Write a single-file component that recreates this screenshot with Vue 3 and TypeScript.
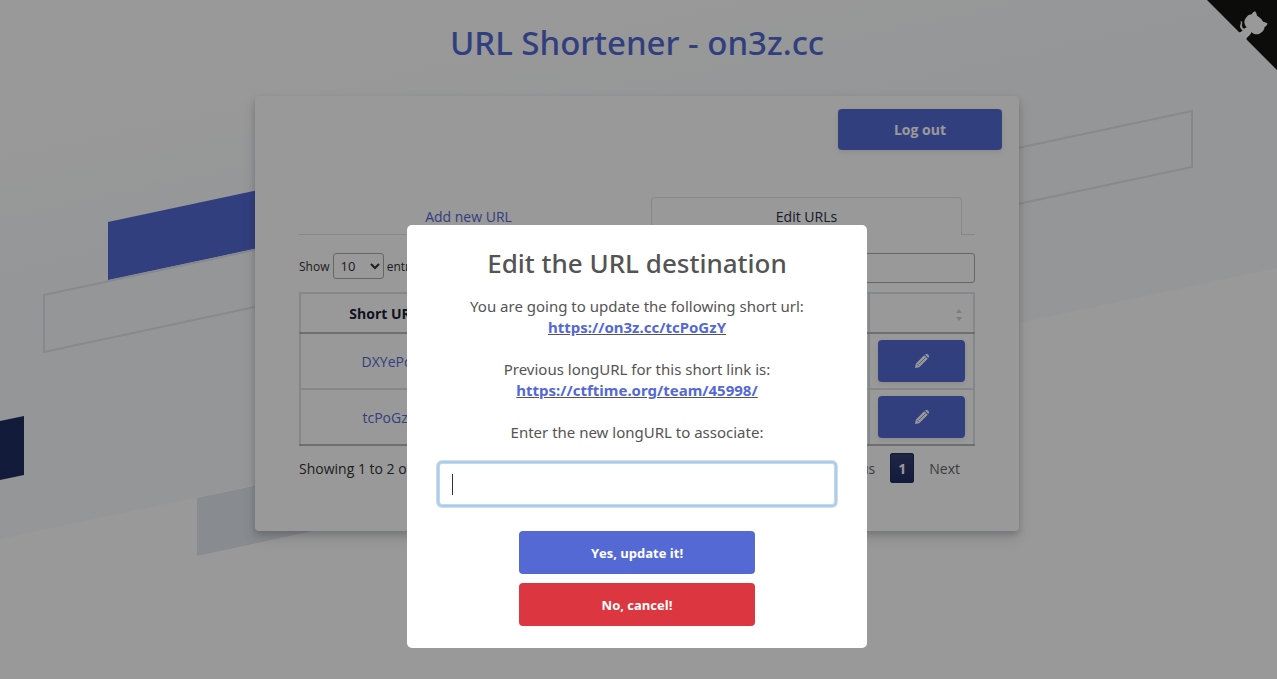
<script setup lang="ts">
import { onMounted, ref } from 'vue'

const codes: string[] = ['DXYePcr', 'tcPoGzY']

const pageSize = ref('10')
const search = ref('')
const newUrl = ref('')
const field = ref<HTMLInputElement | null>(null)

onMounted(() => field.value?.focus())
</script>

<template>
  <div class="page">
    <svg class="backdrop" viewBox="0 0 1277 679" preserveAspectRatio="xMidYMin slice" aria-hidden="true">
      <defs>
        <linearGradient id="sheet" gradientUnits="userSpaceOnUse" x1="0" y1="130" x2="38" y2="309">
          <stop offset="0" stop-color="#ffffff" />
          <stop offset="1" stop-color="#f7fafc" />
        </linearGradient>
      </defs>
      <path d="M0 0H1277V268L0 539Z" fill="url(#sheet)" />
      <path d="M108 222L400 160V218L108 280Z" fill="#5469d4" />
      <path d="M44 295L400 219V276L44 352Z" fill="none" stroke="#e3e5e9" stroke-width="2" />
      <path d="M0 421L24 416V475L0 480Z" fill="#212d63" />
      <path d="M197 498L400 455V512L197 556Z" fill="#e3e8ee" />
      <path d="M1192 111L900 173V229L1192 167Z" fill="none" stroke="#e3e5e9" stroke-width="2" />
    </svg>

    <a class="corner" href="#" aria-label="View source on GitHub">
      <svg viewBox="0 0 250 250" aria-hidden="true">
        <path d="M0,0 L115,115 L130,115 L142,142 L250,250 L250,0 Z" fill="#151513" />
        <path
          d="M128.3,109.0 C113.8,99.7 119.0,89.6 119.0,89.6 C122.0,82.7 120.5,78.6 120.5,78.6 C119.2,72.0 123.4,76.3 123.4,76.3 C127.3,80.9 125.5,87.3 125.5,87.3 C122.9,97.6 130.6,101.9 134.4,103.2"
          fill="#ffffff"
        />
        <path
          d="M115.0,115.0 C114.9,115.1 118.7,116.5 119.8,115.4 L133.7,101.6 C136.9,99.2 139.9,98.4 142.2,98.6 C133.8,88.0 127.5,74.4 143.8,58.0 C148.5,53.4 154.0,51.2 159.7,51.0 C160.3,49.4 163.2,43.6 171.4,40.1 C171.4,40.1 176.1,42.5 178.8,56.2 C183.1,58.6 187.2,61.8 190.9,65.4 C194.5,69.0 197.7,73.2 200.1,77.6 C213.8,80.2 216.3,84.9 216.3,84.9 C212.7,93.1 206.9,96.0 205.4,96.6 C205.1,102.4 203.0,107.8 198.3,112.5 C181.9,128.9 168.3,122.5 157.7,114.1 C157.9,116.9 156.7,120.9 152.7,124.9 L141.0,136.5 C139.8,137.7 141.6,141.9 141.8,141.8 Z"
          fill="#ffffff"
        />
      </svg>
    </a>

    <h1 class="title">URL Shortener - on3z.cc</h1>

    <main class="card">
      <div class="top">
        <button type="button" class="btn logout">Log out</button>
      </div>

      <div class="content">
        <ul class="tabs">
          <li><a href="#add">Add new URL</a></li>
          <li><a href="#edit" class="active">Edit URLs</a></li>
        </ul>

        <div class="controls">
          <label>
            Show
            <select v-model="pageSize">
              <option>10</option>
              <option>25</option>
            </select>
            entries
          </label>
          <input v-model="search" type="search" aria-label="Search" />
        </div>

        <table>
          <thead>
            <tr>
              <th class="short">Short URL</th>
              <th></th>
              <th class="action">
                <svg class="sort" viewBox="0 0 6 12" role="img" aria-label="Sort">
                  <path d="M0 4L3 0L6 4ZM0 8L3 12L6 8Z" fill="#d2d2d2" />
                </svg>
              </th>
            </tr>
          </thead>
          <tbody>
            <tr v-for="code in codes" :key="code">
              <td><a href="#">{{ code }}</a></td>
              <td></td>
              <td>
                <button type="button" class="btn edit" aria-label="Edit">
                  <svg viewBox="0 0 16 16" aria-hidden="true">
                    <path
                      d="M1 15L1.800 10.800L10.200 2.300L13.700 5.800L5.200 14.200ZM10.900 1.600Q12.700 0.200 14.300 1.700T14.400 5.100Z"
                      fill="#fff"
                    />
                    <path d="M4.800 11.200L11.200 4.800M2.600 10.800L5.200 13.400" stroke="#8f9de2" fill="none" />
                  </svg>
                </button>
              </td>
            </tr>
          </tbody>
        </table>

        <div class="footer">
          <span>Showing 1 to 2 of 2 entries</span>
          <nav aria-label="Pages">
            <button type="button" class="step">Previous</button>
            <button type="button" class="current">1</button>
            <button type="button" class="step">Next</button>
          </nav>
        </div>
      </div>
    </main>

    <div class="overlay">
      <form class="modal" role="dialog" aria-labelledby="modal-title" @submit.prevent>
        <h2 id="modal-title">Edit the URL destination</h2>
        <label class="message" for="new-url">
          You are going to update the following short url:<br />
          <u><a href="#">https://on3z.cc/tcPoGzY</a></u><br /><br />
          Previous longURL for this short link is:<br />
          <u><a href="#">https://ctftime.org/team/45998/</a></u><br /><br />
          Enter the new longURL to associate:
        </label>
        <div class="field">
          <input id="new-url" ref="field" v-model="newUrl" type="text" />
          <span v-if="!newUrl" class="caret"></span>
        </div>
        <button type="submit" class="confirm">Yes, update it!</button>
        <button type="button" class="confirm cancel">No, cancel!</button>
      </form>
    </div>
  </div>
</template>

<style>
body {
  margin: 0;
  background: #fff;
}
</style>

<style scoped>
* {
  box-sizing: border-box;
}

.page {
  position: relative;
  min-height: 100vh;
  padding-right: 3px;
  overflow: hidden;
  font-family: 'Open Sans', 'Noto Sans', sans-serif;
  font-size: 14px;
  color: #3c4257;
}

button,
input,
select {
  font-family: inherit;
}

a {
  color: #5469d4;
  text-decoration: none;
}

.backdrop {
  position: absolute;
  inset: 0;
  width: 100%;
  height: 100%;
}

.corner {
  position: absolute;
  top: 0;
  right: 0;
}

.corner svg {
  display: block;
  width: 70px;
  height: 70px;
}

.title {
  position: relative;
  margin: 0;
  padding: 17px 0 27px;
  font-family: 'Noto Sans', 'Open Sans', sans-serif;
  font-size: 33px;
  line-height: 52px;
  font-weight: 500;
  text-align: center;
  color: #5469d4;
}

.card {
  position: relative;
  max-width: 764px;
  margin: 0 auto;
  padding-bottom: 48px;
  border-radius: 4px;
  background: #fff;
  box-shadow: 0 7px 14px rgba(60, 66, 87, 0.16), 0 3px 6px rgba(0, 0, 0, 0.16);
}

.top {
  display: flex;
  justify-content: flex-end;
  padding: 13px 17px 47px;
}

.btn {
  border: 0;
  border-radius: 4px;
  background: #5469d4;
  color: #fff;
  font-weight: 700;
  box-shadow: 0 2px 5px rgba(60, 66, 87, 0.12);
}

.logout {
  width: 164px;
  height: 41px;
  font-size: 14px;
}

.content {
  padding: 0 44px;
}

.tabs {
  display: flex;
  margin: 0 0 18px;
  padding: 0;
  list-style: none;
  border-bottom: 1px solid #dee2e6;
}

.tabs li {
  flex: 1;
  padding: 0 13px 0 14px;
}

.tabs a {
  display: block;
  height: 38px;
  margin-bottom: -1px;
  border: 1px solid transparent;
  border-bottom: 0;
  border-radius: 4px 4px 0 0;
  line-height: 37px;
  text-align: center;
}

.tabs .active {
  border-color: #dee2e6;
  background: #fff;
  color: #2a2f45;
}

.controls {
  display: flex;
  justify-content: space-between;
  align-items: flex-start;
  height: 39px;
  font-size: 12px;
  color: #333;
}

.controls select {
  width: 51px;
  height: 26px;
  padding: 0 3px;
  border: 1px solid #aaa;
  border-radius: 3px;
  background: transparent;
  font-size: 13px;
  color: #333;
}

.controls input {
  width: 200px;
  height: 30px;
  border: 1px solid #aaa;
  border-radius: 3px;
  background: transparent;
}

table {
  width: 100%;
  border-collapse: collapse;
  table-layout: fixed;
  text-align: center;
}

th,
td {
  height: 56px;
  padding: 0 8px;
  border: 2px solid #dce3e8;
}

th {
  height: 40px;
  padding: 0 18px 0 8px;
  border-bottom-color: #b4b8bb;
  font-weight: 700;
  color: #1a1f36;
}

tbody tr:last-child td {
  border-bottom-color: #b4b8bb;
}

.short {
  width: 178px;
}

.action {
  width: 105px;
  padding: 0 11px 0 8px;
  text-align: right;
}

.sort {
  display: inline-block;
  width: 6px;
  height: 12px;
  vertical-align: middle;
}

.edit {
  display: flex;
  align-items: center;
  justify-content: center;
  width: 100%;
  height: 42px;
}

.edit svg {
  width: 16px;
  height: 16px;
}

.footer {
  display: flex;
  justify-content: space-between;
  align-items: center;
  padding-top: 7px;
  color: #333;
}

.footer nav {
  display: flex;
}

.footer button {
  height: 30px;
  padding: 0;
  border: 0;
  background: transparent;
  font-size: 14px;
}

.footer .step {
  padding: 0 15px;
  color: #666;
}

.footer .current {
  width: 24px;
  border: 1px solid #212d63;
  border-radius: 2px;
  background: linear-gradient(#333f74, #212d63);
  color: #fff;
  font-weight: 700;
}

.overlay {
  position: absolute;
  inset: 0;
  display: flex;
  justify-content: center;
  align-items: flex-start;
  padding: 225px 3px 0 0;
  background: rgba(0, 0, 0, 0.4);
}

.modal {
  display: flex;
  flex-direction: column;
  align-items: center;
  width: 460px;
  padding: 19px 30px 22px;
  border-radius: 5px;
  background: #fff;
  color: #545454;
}

.modal h2 {
  margin: 0 0 14px;
  font-family: 'Noto Sans', 'Open Sans', sans-serif;
  font-size: 26px;
  line-height: 38px;
  font-weight: 500;
}

.message {
  font-family: 'Noto Sans', 'Open Sans', sans-serif;
  font-size: 15px;
  line-height: 21px;
  text-align: center;
}

.message a {
  font-weight: 700;
}

.field {
  position: relative;
  width: 100%;
  padding: 20px 2px 26px;
}

.field input {
  display: block;
  width: 100%;
  height: 42px;
  padding: 0 12px;
  border: 1px solid #b9dcee;
  border-radius: 3px;
  outline: 0;
  box-shadow: 0 0 0 2px #afcbe6, 0 0 0 3px #cfe0f1;
  font-size: 17px;
  color: #333;
  background: #fff;
  caret-color: transparent;
}

.caret {
  position: absolute;
  top: 31px;
  left: 15px;
  width: 1px;
  height: 21px;
  background: #333;
}

.confirm {
  width: 236px;
  height: 43px;
  border: 0;
  border-radius: 4px;
  background: #5469d4;
  color: #fff;
  font-size: 13px;
  font-weight: 700;
}

.cancel {
  margin-top: 9px;
  background: #dc3741;
}
</style>
